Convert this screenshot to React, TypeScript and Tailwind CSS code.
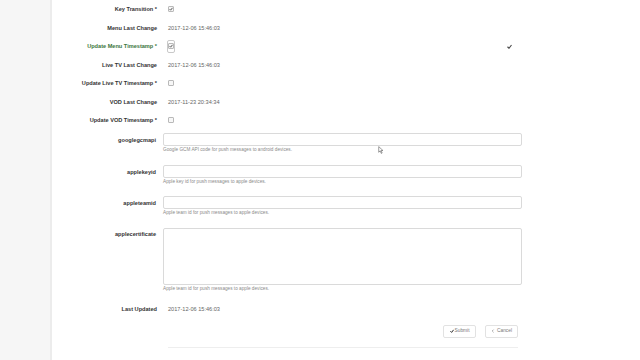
import React from 'react'

const font = { fontFamily: '"Liberation Sans", Arial, sans-serif' }

function Check({ on, focus }: { on?: boolean; focus?: boolean }) {
  const box = (
    <span className="flex h-[6px] w-[6px] items-center justify-center rounded-[1px] border border-[#b9b9b9] bg-[#f7f7f7]">
      {on && (
        <svg viewBox="0 0 10 10" className="h-[6px] w-[6px]">
          <path d="M1.5 5.5 L4 8 L8.8 2" fill="none" stroke="#333" strokeWidth="2" />
        </svg>
      )}
    </span>
  )
  if (!focus) return box
  return <span className="flex h-[13px] w-[8px] items-center justify-center rounded-[2px] border border-[#c9c9c9]">{box}</span>
}

function Row({ label, req, success, children }: { label: string; req?: boolean; success?: boolean; children: React.ReactNode }) {
  return (
    <div className="flex h-[18.5px] items-center">
      <div className={`w-[102px] pr-[1px] text-right text-[5.6px] font-bold ${success ? 'text-[#3c763d]' : 'text-[#333]'}`}>
        {label}
        {req && ' *'}
      </div>
      <div className="ml-[10px] flex items-center text-[5.6px] text-[#666]">{children}</div>
    </div>
  )
}

function Field({ label, help, tall }: { label: string; help: string; tall?: boolean }) {
  return (
    <div className="flex">
      <div className={`w-[102px] pr-[2px] text-right text-[5.6px] font-bold text-[#333] ${tall ? 'pt-[2px]' : 'pt-[3px]'}`}>{label}</div>
      <div className="ml-[5px] w-[359px]">
        <div className={`rounded-[2px] border border-[#dadada] bg-white ${tall ? 'h-[57px]' : 'h-[13px]'}`} />
        <div className="mt-[1px] text-[4.7px] leading-[6px] text-[#8a8a8a]">{help}</div>
      </div>
    </div>
  )
}

export default function App() {
  return (
    <div className="relative flex h-[360px] w-[640px] overflow-hidden bg-white" style={font}>
      <div className="w-[52px] shrink-0 border-r-[2px] border-[#ececec] bg-[#f6f6f6]" />
      <div className="flex-1 pl-[4px]">
        <Row label="Key Transition" req>
          <Check on />
        </Row>
        <Row label="Menu Last Change">2017-12-06 15:46:03</Row>
        <div className="relative">
          <Row label="Update Menu Timestamp" req success>
            <span className="-ml-[1px]">
              <Check on focus />
            </span>
          </Row>
          <svg viewBox="0 0 10 10" className="absolute left-[451px] top-[7px] h-[5px] w-[5px]">
            <path d="M1 5.5 L4 8.5 L9 2" fill="none" stroke="#444" strokeWidth="2.2" />
          </svg>
        </div>
        <Row label="Live TV Last Change">2017-12-06 15:46:03</Row>
        <Row label="Update Live TV Timestamp" req>
          <Check />
        </Row>
        <Row label="VOD Last Change">2017-11-23 20:34:34</Row>
        <Row label="Update VOD Timestamp" req>
          <Check />
        </Row>

        <div className="mt-[3.5px] flex flex-col gap-[11.5px]">
          <Field label="googlegcmapi" help="Google GCM API code for push messages to android devices." />
          <Field label="applekeyid" help="Apple key id for push messages to apple devices." />
          <Field label="appleteamid" help="Apple team id for push messages to apple devices." />
          <Field label="applecertificate" help="Apple team id for push messages to apple devices." tall />
        </div>

        <div className="mt-[10px] flex h-[16px] items-center">
          <div className="w-[102px] pr-[1px] text-right text-[5.6px] font-bold text-[#333]">Last Updated</div>
          <div className="ml-[10px] text-[5.6px] text-[#666]">2017-12-06 15:46:03</div>
        </div>

        <div className="mt-[7px] flex w-[462px] justify-end gap-[9px]">
          <button className="flex h-[13px] w-[33px] items-center justify-center gap-[1px] rounded-[2px] border border-[#e2e2e2] bg-white text-[4.8px] text-[#777]">
            <svg viewBox="0 0 10 10" className="h-[4px] w-[4px]">
              <path d="M1 5.5 L4 8.5 L9 2" fill="none" stroke="#222" strokeWidth="2.4" />
            </svg>
            Submit
          </button>
          <button className="flex h-[13px] w-[33px] items-center justify-center gap-[2px] rounded-[2px] border border-[#e2e2e2] bg-white text-[4.8px] text-[#777]">
            <svg viewBox="0 0 10 10" className="h-[4px] w-[4px]">
              <path d="M6.5 1.5 L3 5 L6.5 8.5" fill="none" stroke="#666" strokeWidth="1.3" />
            </svg>
            Cancel
          </button>
        </div>

        <div className="ml-[112px] mt-[9px] h-px w-[350px] bg-[#eeeeee]" />
      </div>

      <svg viewBox="0 0 10 14" className="absolute left-[378px] top-[146px] h-[8px] w-[6px]">
        <path d="M1 1 L1 11 L3.5 8.5 L5.5 13 L7 12.3 L5 8 L8.5 8 Z" fill="#fff" stroke="#555" strokeWidth="1" />
      </svg>
    </div>
  )
}
